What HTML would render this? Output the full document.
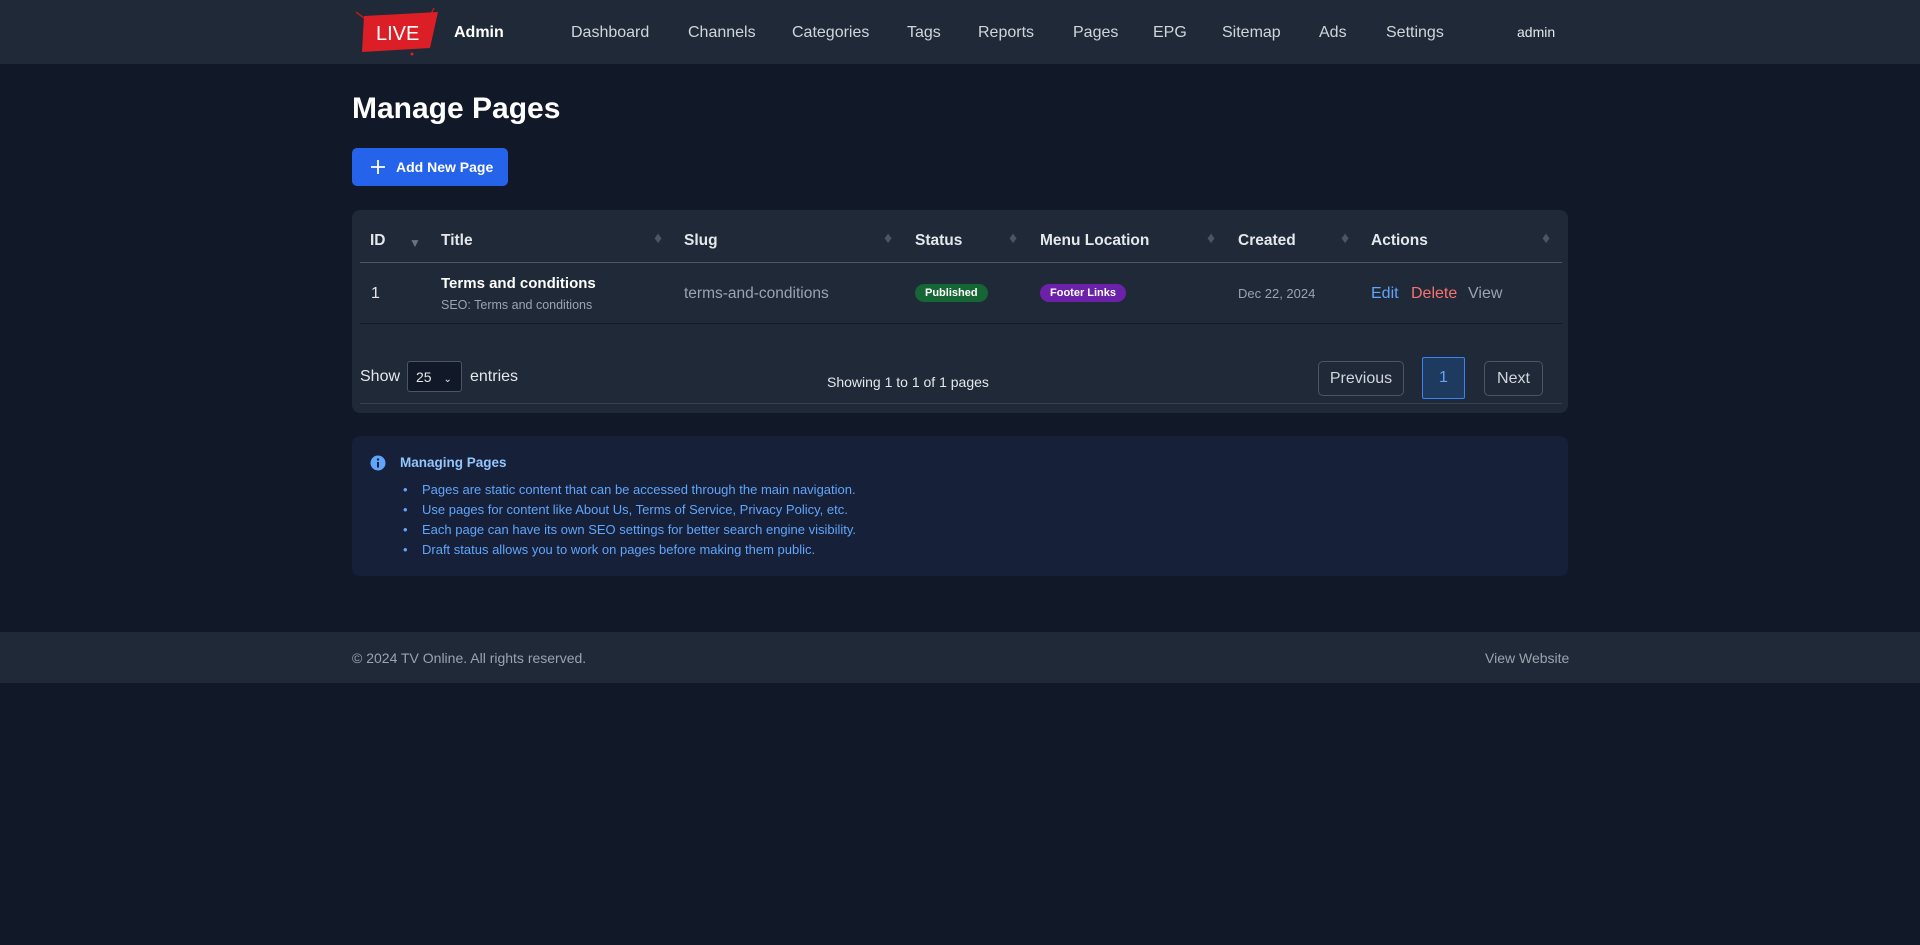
<!DOCTYPE html>
<html><head><meta charset="utf-8"><style>
*{box-sizing:border-box;margin:0;padding:0}
body{width:1920px;height:945px;background:#111827;font-family:"Liberation Sans",sans-serif;color:#e5e7eb;position:relative;overflow:hidden}
.a{position:absolute;white-space:nowrap}
nav{position:absolute;left:0;top:0;width:1920px;height:64px;background:#1f2937}
.nl{font-size:16px;color:#d1d5db;top:24px}
.h{font-weight:bold;font-size:15.5px;color:#e5e7eb}
.sort{color:#4b5563;font-size:16px}
.pill{font-size:11px;font-weight:bold;color:#fff;border-radius:10px;padding:3px 10px}
.btnp{border:1px solid #4b5563;border-radius:5px;font-size:16px;color:#d1d5db;text-align:center;line-height:34px}
.info li{position:absolute;left:403px;font-size:13px;color:#60a5fa;list-style:none}
</style></head><body>
<nav>
<svg class="a" style="left:352px;top:4px" width="92" height="54" viewBox="0 0 92 54">
<line x1="4" y1="8" x2="12" y2="14" stroke="#b91c1c" stroke-width="1.5"/>
<line x1="82" y1="4" x2="78" y2="12" stroke="#b91c1c" stroke-width="1.5"/>
<polygon points="12,12 86,8 78,44 10,48" fill="#dc1f26"/>
<circle cx="60" cy="50" r="1.5" fill="#dc1f26"/>
<text x="24" y="36" font-family="Liberation Sans" font-size="20" fill="#fff">LIVE</text>
</svg>
<div class="a" style="left:454px;top:24px;font-weight:bold;font-size:16px;color:#fff">Admin</div>
<div class="a nl" style="left:571px">Dashboard</div>
<div class="a nl" style="left:688px">Channels</div>
<div class="a nl" style="left:792px">Categories</div>
<div class="a nl" style="left:907px">Tags</div>
<div class="a nl" style="left:978px">Reports</div>
<div class="a nl" style="left:1073px">Pages</div>
<div class="a nl" style="left:1153px">EPG</div>
<div class="a nl" style="left:1222px">Sitemap</div>
<div class="a nl" style="left:1319px">Ads</div>
<div class="a nl" style="left:1386px">Settings</div>
<div class="a" style="left:1517px;top:24px;font-size:14px;color:#e5e7eb">admin</div>
</nav>
<div class="a" style="left:352px;top:92px;font-size:30px;font-weight:bold;color:#fff">Manage Pages</div>
<div class="a" style="left:352px;top:148px;width:156px;height:38px;background:#2563eb;border-radius:5px;color:#fff;font-size:14px;font-weight:bold;line-height:38px;padding-left:44px">Add New Page</div>
<svg class="a" style="left:370px;top:159px" width="16" height="16"><path d="M8 1v14M1 8h14" stroke="#fff" stroke-width="1.8"/></svg>

<div class="a" style="left:352px;top:210px;width:1216px;height:203px;background:#1f2937;border-radius:8px"></div>
<div class="a" style="left:360px;top:262px;width:1202px;height:1px;background:#4b5563"></div>
<div class="a" style="left:360px;top:323px;width:1202px;height:1px;background:#111827"></div>
<div class="a" style="left:360px;top:403px;width:1202px;height:1px;background:#374151"></div>
<div class="a h" style="left:370px;top:232px">ID</div>
<div class="a h" style="left:441px;top:232px">Title</div>
<div class="a h" style="left:684px;top:232px">Slug</div>
<div class="a h" style="left:915px;top:232px">Status</div>
<div class="a h" style="left:1040px;top:232px">Menu Location</div>
<div class="a h" style="left:1238px;top:232px">Created</div>
<div class="a h" style="left:1371px;top:232px">Actions</div>
<div class="a" style="left:409px;top:236px;color:#6b7280;font-size:12px">▼</div>
<div class="a sort" style="left:654px;top:230px">♦</div>
<div class="a sort" style="left:884px;top:230px">♦</div>
<div class="a sort" style="left:1009px;top:230px">♦</div>
<div class="a sort" style="left:1207px;top:230px">♦</div>
<div class="a sort" style="left:1341px;top:230px">♦</div>
<div class="a sort" style="left:1542px;top:230px">♦</div>
<div class="a" style="left:371px;top:285px;font-size:16px">1</div>
<div class="a" style="left:441px;top:275px;font-size:15px;font-weight:bold;color:#fff">Terms and conditions</div>
<div class="a" style="left:441px;top:298px;font-size:12.5px;color:#9ca3af">SEO: Terms and conditions</div>
<div class="a" style="left:684px;top:285px;font-size:15.5px;color:#9ca3af">terms-and-conditions</div>
<div class="a pill" style="left:915px;top:284px;background:#166534">Published</div>
<div class="a pill" style="left:1040px;top:284px;background:#6b21a8">Footer Links</div>
<div class="a" style="left:1238px;top:286px;font-size:13px;color:#9ca3af">Dec 22, 2024</div>
<div class="a" style="left:1371px;top:285px;font-size:16px;color:#60a5fa">Edit</div>
<div class="a" style="left:1411px;top:285px;font-size:16px;color:#f87171">Delete</div>
<div class="a" style="left:1468px;top:285px;font-size:16px;color:#9ca3af">View</div>

<div class="a" style="left:360px;top:368px;font-size:16px">Show</div>
<div class="a" style="left:407px;top:361px;width:55px;height:31px;background:#111827;border:1px solid #4b5563;border-radius:3px;font-size:14px;padding:7px 0 0 8px">25 <span style="font-size:10px;margin-left:8px">⌄</span></div>
<div class="a" style="left:470px;top:368px;font-size:16px">entries</div>
<div class="a" style="left:827px;top:374px;font-size:14px">Showing 1 to 1 of 1 pages</div>
<div class="a btnp" style="left:1318px;top:361px;width:86px;height:35px">Previous</div>
<div class="a btnp" style="left:1422px;top:357px;width:43px;height:42px;line-height:40px;border-color:#3b82f6;background:#1e3a5f;color:#60a5fa;border-radius:2px">1</div>
<div class="a btnp" style="left:1484px;top:361px;width:59px;height:35px">Next</div>

<div class="a" style="left:352px;top:436px;width:1216px;height:140px;background:#172039;border-radius:8px"></div>
<svg class="a" style="left:370px;top:455px" width="16" height="16"><circle cx="8" cy="8" r="7.5" fill="#60a5fa"/><circle cx="8" cy="4.5" r="1.2" fill="#172039"/><rect x="7" y="7" width="2" height="5.5" fill="#172039"/></svg>
<div class="a" style="left:400px;top:455px;font-size:13.5px;font-weight:bold;color:#93c5fd">Managing Pages</div>
<ul class="info">
<li style="top:482px">•&nbsp;&nbsp;&nbsp;&nbsp;Pages are static content that can be accessed through the main navigation.</li>
<li style="top:502px">•&nbsp;&nbsp;&nbsp;&nbsp;Use pages for content like About Us, Terms of Service, Privacy Policy, etc.</li>
<li style="top:522px">•&nbsp;&nbsp;&nbsp;&nbsp;Each page can have its own SEO settings for better search engine visibility.</li>
<li style="top:542px">•&nbsp;&nbsp;&nbsp;&nbsp;Draft status allows you to work on pages before making them public.</li>
</ul>

<div class="a" style="left:0;top:632px;width:1920px;height:51px;background:#1f2937"></div>
<div class="a" style="left:352px;top:650px;font-size:14px;color:#9ca3af">© 2024 TV Online. All rights reserved.</div>
<div class="a" style="left:1485px;top:650px;font-size:14px;color:#9ca3af">View Website</div>
</body></html>
